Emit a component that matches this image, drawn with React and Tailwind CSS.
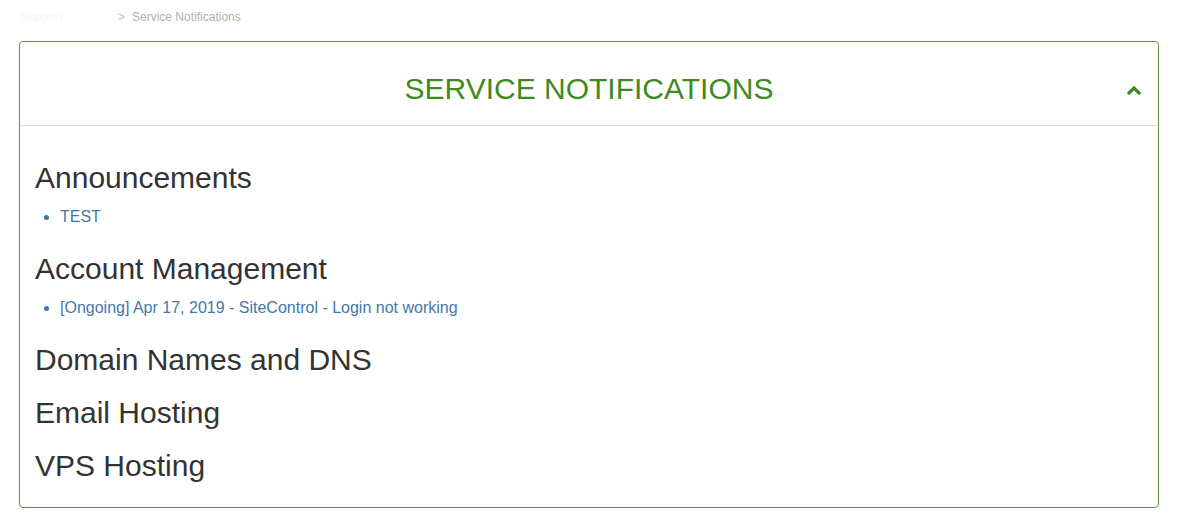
import React, { useState } from 'react'

const sections = [
  { title: 'Announcements', items: ['TEST'] },
  { title: 'Account Management', items: ['[Ongoing] Apr 17, 2019 - SiteControl - Login not working'] },
  { title: 'Domain Names and DNS', items: [] },
  { title: 'Email Hosting', items: [] },
  { title: 'VPS Hosting', items: [] },
]

export default function App() {
  const [open, setOpen] = useState(true)

  return (
    <div className="min-h-screen bg-white font-['Liberation_Sans',Arial,sans-serif] text-[#333]">
      <div className="h-[41px] pl-[20px] pt-[9px] text-[12px] leading-[17px]">
        <span className="inline-block w-[98px] text-[#f7f7f7]">Support</span>
        <span className="text-[#b8b8b8]">&gt;</span>
        <span className="ml-[7px] text-[#b0b0b0]">Service Notifications</span>
      </div>

      <div className="ml-[19px] w-[1140px] rounded-[4px] border border-[#5e9c3f]">
        <div className="relative border-b border-[#dddddd] pt-[30px] pb-[20px]">
          <h2 className="text-center text-[30px] leading-[33px] text-[#3f8a1f]">SERVICE NOTIFICATIONS</h2>
          <button
            onClick={() => setOpen(!open)}
            className="absolute right-[16px] top-[41px] flex h-[14px] w-[16px] items-center justify-center"
          >
            <svg width="14" height="10" viewBox="0 0 14 10">
              <polyline
                points={open ? '2,8 7,3 12,8' : '2,2 7,7 12,2'}
                fill="none"
                stroke="#3f8a1f"
                strokeWidth="3.2"
                strokeLinecap="square"
              />
            </svg>
          </button>
        </div>

        {open && (
          <div className="px-[15px] pt-[15px] pb-[15px]">
            {sections.map((s) => (
              <div key={s.title}>
                <h3 className="mt-[20px] mb-[10px] text-[30px] leading-[33px] text-[#333]">{s.title}</h3>
                {s.items.length > 0 && (
                  <ul className="mb-[22px] list-disc pl-[25px] marker:text-[#3f77aa]">
                    {s.items.map((it) => (
                      <li key={it} className="text-[16px] leading-[26px]">
                        <a href="#" className="text-[#4378a8]">{it}</a>
                      </li>
                    ))}
                  </ul>
                )}
              </div>
            ))}
          </div>
        )}
      </div>
    </div>
  )
}
